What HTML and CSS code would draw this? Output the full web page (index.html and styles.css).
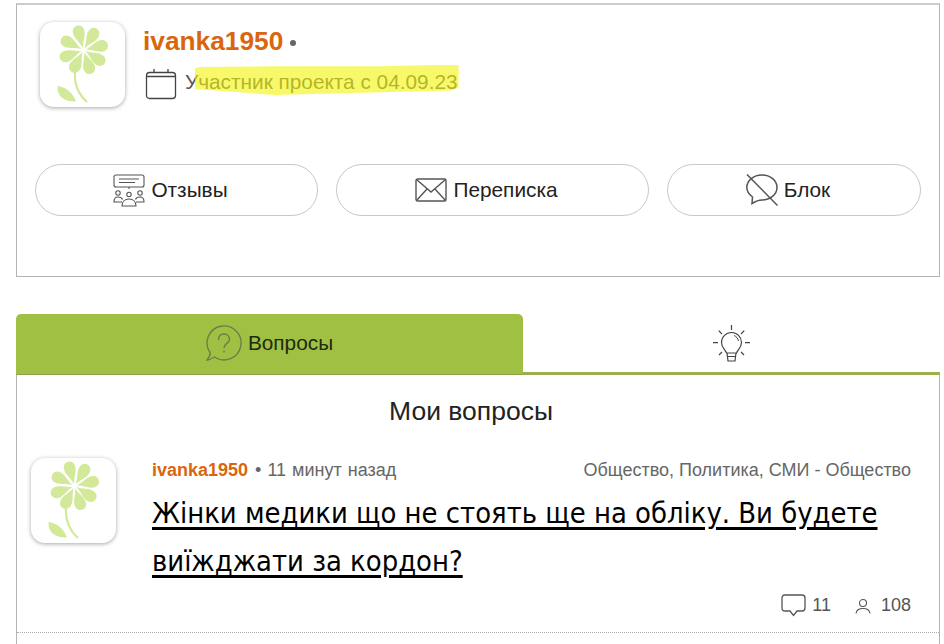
FILE: index.html
```html
<!DOCTYPE html>
<html lang="ru">
<head>
    <meta charset="UTF-8">
    <meta name="viewport" content="width=device-width, initial-scale=1.0">
    <title>ivanka1950</title>
    <link rel="stylesheet" href="styles.css">
</head>
<body>
    <svg class="defs" width="0" height="0">
        <symbol id="flower" viewBox="0 0 85 85">
            <g fill="#d3e99a" transform="translate(43.500 28)">
                <path id="petal" d="M0 -2 C-1.500 -9 -5.800 -13 -5.800 -18.500 C-5.800 -22.500 -3.500 -25 0 -25 C3.500 -25 5.800 -22.500 5.800 -18.500 C5.800 -13 1.500 -9 0 -2Z" transform="rotate(-15)"/>
                <use href="#petal" transform="rotate(47)"/>
                <use href="#petal" transform="rotate(92)"/>
                <use href="#petal" transform="rotate(137)"/>
                <use href="#petal" transform="rotate(177)"/>
                <use href="#petal" transform="rotate(222)"/>
                <use href="#petal" transform="rotate(265)"/>
                <use href="#petal" transform="rotate(312)"/>
            </g>
            <path d="M35 49 C34 62 38 72 47 80" fill="none" stroke="#d3e99a" stroke-width="2.200"/>
            <path d="M17.500 64 C26 65 33 71 36 79.500 C26 80 17 76 17.500 64Z" fill="#d3e99a"/>
        </symbol>
    </svg>

    <section class="profile">
        <div class="profile-head">
            <div class="avatar"><svg><use href="#flower"/></svg></div>
            <div class="profile-info">
                <div class="profile-name"><span class="nick">ivanka1950</span><span class="dot"></span></div>
                <div class="profile-since">
                    <svg class="ico-cal" width="32" height="32" viewBox="0 0 32 32" fill="none" stroke="#444" stroke-width="1.300">
                        <rect x="1.500" y="4.500" width="29" height="26" rx="3"/>
                        <path d="M1.500 8.500H30.500M9 1V4.500M23 1V4.500"/>
                    </svg>
                    <span class="since-text">Участник проекта с 04.09.23<span class="marker"></span></span>
                </div>
            </div>
        </div>
        <div class="profile-buttons">
            <a class="pill pill-reviews">
                <svg width="32" height="33" viewBox="0 0 32 33" fill="none" stroke="#555" stroke-width="1.100">
                    <rect x="1" y="1" width="30" height="12" rx="2"/>
                    <path d="M6 5H26M6 8.500H22M16 13V15"/>
                    <circle cx="5" cy="19" r="2.200"/><circle cx="16" cy="20.500" r="2.200"/><circle cx="27" cy="19" r="2.200"/>
                    <path d="M9 28H1C1 24.500 3 23 5 23C7 23 9 24 9.500 25.500M22.500 25.500C23 24 25 23 27 23C29 23 31 24.500 31 28H23"/>
                    <path d="M9 32C9 27.500 12 25 16 25C20 25 23 27.500 23 32Z"/>
                </svg>
                Отзывы
            </a>
            <a class="pill pill-mail">
                <svg width="32" height="24" viewBox="0 0 32 24" fill="none" stroke="#555" stroke-width="1.400">
                    <rect x="1" y="1" width="30" height="22" rx="1.500"/>
                    <path d="M1.500 1.500L16 14L30.500 1.500M1.500 22.500L12 11M30.500 22.500L20 11"/>
                </svg>
                Переписка
            </a>
            <a class="pill pill-block">
                <svg width="32" height="32" viewBox="0 0 32 32" fill="none" stroke="#555" stroke-width="1.500">
                    <path d="M6 29.500L6.500 23C2.500 20 0.800 17 0.800 13.500C0.800 6.500 7.500 1 16 1C24.500 1 31 6.500 31 13.500C31 20.500 24 26 16 26C13 26 10 27 6 29.500Z"/>
                    <path d="M1 0.500L31.500 31.500"/>
                </svg>
                Блок
            </a>
        </div>
    </section>

    <nav class="tabs">
        <div class="tab tab-active">
            <svg width="36" height="36" viewBox="0 0 36 36" fill="none" stroke="#6b7d4a" stroke-width="1.400">
                <path d="M8.500 32C6 33.500 3.500 35 1 35C3 32.500 4.500 30 4 27.500A17 17 0 1 1 8.500 32Z"/>
                <path d="M12.500 15C12.500 11 15 9 18 9C21 9 23.500 11 23.500 14.500C23.500 18 18 18.500 18 23M18 25.500V27.500"/>
            </svg>
            Вопросы
        </div>
        <div class="tab tab-idle">
            <svg width="37" height="37" viewBox="0 0 37 37" fill="none" stroke="#444" stroke-width="1.200">
                <path d="M13.500 28C12.500 25 8.500 23 8.500 17.500A10 10 0 0 1 28.500 17.500C28.500 23 24.500 25 23.500 28Z"/>
                <path d="M14 28L15 36H22L23 28M14.500 31.500H22.500"/>
                <path d="M21 10.500C23.500 11.500 25 13.500 25.500 16" stroke-width="1"/>
                <path d="M18.500 0V5M5.700 5.700L9 9M31.300 5.700L28 9M0 17.700H5M32 17.700H37M6 30L9 27M31 30L28 27"/>
            </svg>
        </div>
    </nav>

    <main class="panel">
        <h2 class="panel-title">Мои вопросы</h2>
        <article class="question">
            <div class="avatar"><svg><use href="#flower"/></svg></div>
            <div class="question-body">
                <div class="question-meta">
                    <div><span class="q-nick">ivanka1950</span> <span class="q-time">• 11 минут назад</span></div>
                    <div class="q-cat">Общество, Политика, СМИ - Общество</div>
                </div>
                <a class="question-title">Жінки медики що не стоять ще на обліку. Ви будете виїжджати за кордон?</a>
                <div class="question-stats">
                    <svg width="25" height="23" viewBox="0 0 25 23" fill="none" stroke="#555" stroke-width="1.300">
                        <path d="M4 1H21C23 1 24 2 24 4V14C24 16 23 17 21 17H16L12.500 21.500L9 17H4C2 17 1 16 1 14V4C1 2 2 1 4 1Z"/>
                    </svg>
                    <span class="stat-num">11</span>
                    <svg class="ico-user" width="16" height="16" viewBox="0 0 16 16" fill="none" stroke="#555" stroke-width="1.100">
                        <circle cx="8" cy="5" r="3.500"/>
                        <path d="M1 15.500C1.500 12 4 10.500 8 10.500C12 10.500 14.500 12 15 15.500"/>
                    </svg>
                    <span class="stat-num">108</span>
                </div>
            </div>
        </article>
    </main>
</body>
</html>
```

FILE: styles.css
```css
* {
    box-sizing: border-box;
}
body {
    margin: 0;
    padding: 3px 4px 0 16px;
    height: 644px;
    overflow: hidden;
    background: #fff;
    font-family: 'Liberation Sans', Arial, sans-serif;
    color: #222;
}
.defs {
    display: block;
    height: 0;
}
.profile {
    height: 274px;
    padding: 17px 18px 0 18px;
    border: 1px solid #b4b4b4;
    border-top: 2px solid #ccc;
}
.profile-head {
    display: flex;
    padding-left: 5px;
}
.avatar {
    flex: none;
    width: 85px;
    height: 85px;
    background: #fff;
    border-radius: 14px;
    box-shadow: 0 1px 4px rgba(0, 0, 0, 0.35);
}
.avatar svg {
    display: block;
    width: 100%;
    height: 100%;
}
.profile-info {
    margin-left: 18px;
}
.profile-name {
    display: flex;
    align-items: center;
    height: 38px;
}
.nick {
    font-size: 26.300px;
    font-weight: bold;
    color: #d9660f;
}
.dot {
    width: 6px;
    height: 6px;
    margin: 4px 0 0 7px;
    border-radius: 50%;
    background: #666;
}
.profile-since {
    display: flex;
    align-items: center;
    margin-top: 8px;
    font-size: 20.800px;
    color: #555;
}
.ico-cal {
    margin: 0 8px 0 2px;
}
.since-text {
    position: relative;
    margin-bottom: 5px;
}
.marker {
    position: absolute;
    left: 10px;
    right: -1px;
    top: -5px;
    height: 31px;
    background: rgba(243, 245, 7, 0.6);
    clip-path: polygon(0 12%, 2% 8%, 30% 6%, 70% 6%, 100% 0, 100% 75%, 97% 84%, 60% 92%, 30% 98%, 8% 84%, 0 80%);
}
.profile-buttons {
    display: flex;
    gap: 18px;
    margin-top: 57px;
}
.pill {
    display: flex;
    align-items: center;
    justify-content: center;
    gap: 6px;
    height: 52px;
    padding-right: 12px;
    border: 1px solid #c8c8c8;
    border-radius: 26px;
    font-size: 20.800px;
    color: #222;
}
.pill-reviews {
    width: 283px;
}
.pill-mail {
    width: 313px;
}
.pill-block {
    width: 254px;
}
.tabs {
    display: flex;
    margin-top: 37px;
    height: 61px;
}
.tab {
    display: flex;
    align-items: center;
    justify-content: center;
    gap: 6px;
    font-size: 20.800px;
}
.tab-active {
    width: 507px;
    padding-bottom: 2px;
    background: #a0c043;
    border-bottom: 1px solid #8da24a;
    border-radius: 5px 5px 0 0;
    color: #1c2a10;
}
.tab-idle {
    flex: 1;
    border-bottom: 3px solid #9ab04e;
}
.panel {
    height: 280px;
    border-left: 1px solid #b4b4b4;
    border-right: 1px solid #b4b4b4;
}
.panel-title {
    margin: 0;
    padding: 20px 14px 0 0;
    font-size: 26.500px;
    line-height: 32px;
    font-weight: normal;
    text-align: center;
    color: #222;
}
.question {
    display: flex;
    height: 175px;
    margin-top: 31px;
    padding: 0 28px 0 14px;
    border-bottom: 1px dotted #aaa;
}
.question-body {
    flex: 1;
    margin-left: 36px;
    padding-top: 2px;
}
.question-meta {
    display: flex;
    justify-content: space-between;
    font-size: 18px;
    line-height: 20px;
    color: #666;
}
.q-nick {
    font-weight: bold;
    color: #d9660f;
}
.q-time {
    margin-left: 2px;
    word-spacing: 1px;
}
.question-title {
    display: block;
    margin-top: 9px;
    font-family: 'DejaVu Sans Condensed', 'DejaVu Sans', sans-serif;
    font-stretch: condensed;
    font-size: 28.850px;
    line-height: 48px;
    color: #000;
    text-decoration: underline;
    text-decoration-thickness: 3px;
    text-underline-offset: 4px;
}
.question-stats {
    display: flex;
    align-items: center;
    justify-content: flex-end;
    margin-top: 9px;
    font-size: 18px;
    color: #555;
}
.stat-num {
    margin-left: 6px;
}
.ico-user {
    margin-left: 24px;
    margin-right: 4px;
}
```
